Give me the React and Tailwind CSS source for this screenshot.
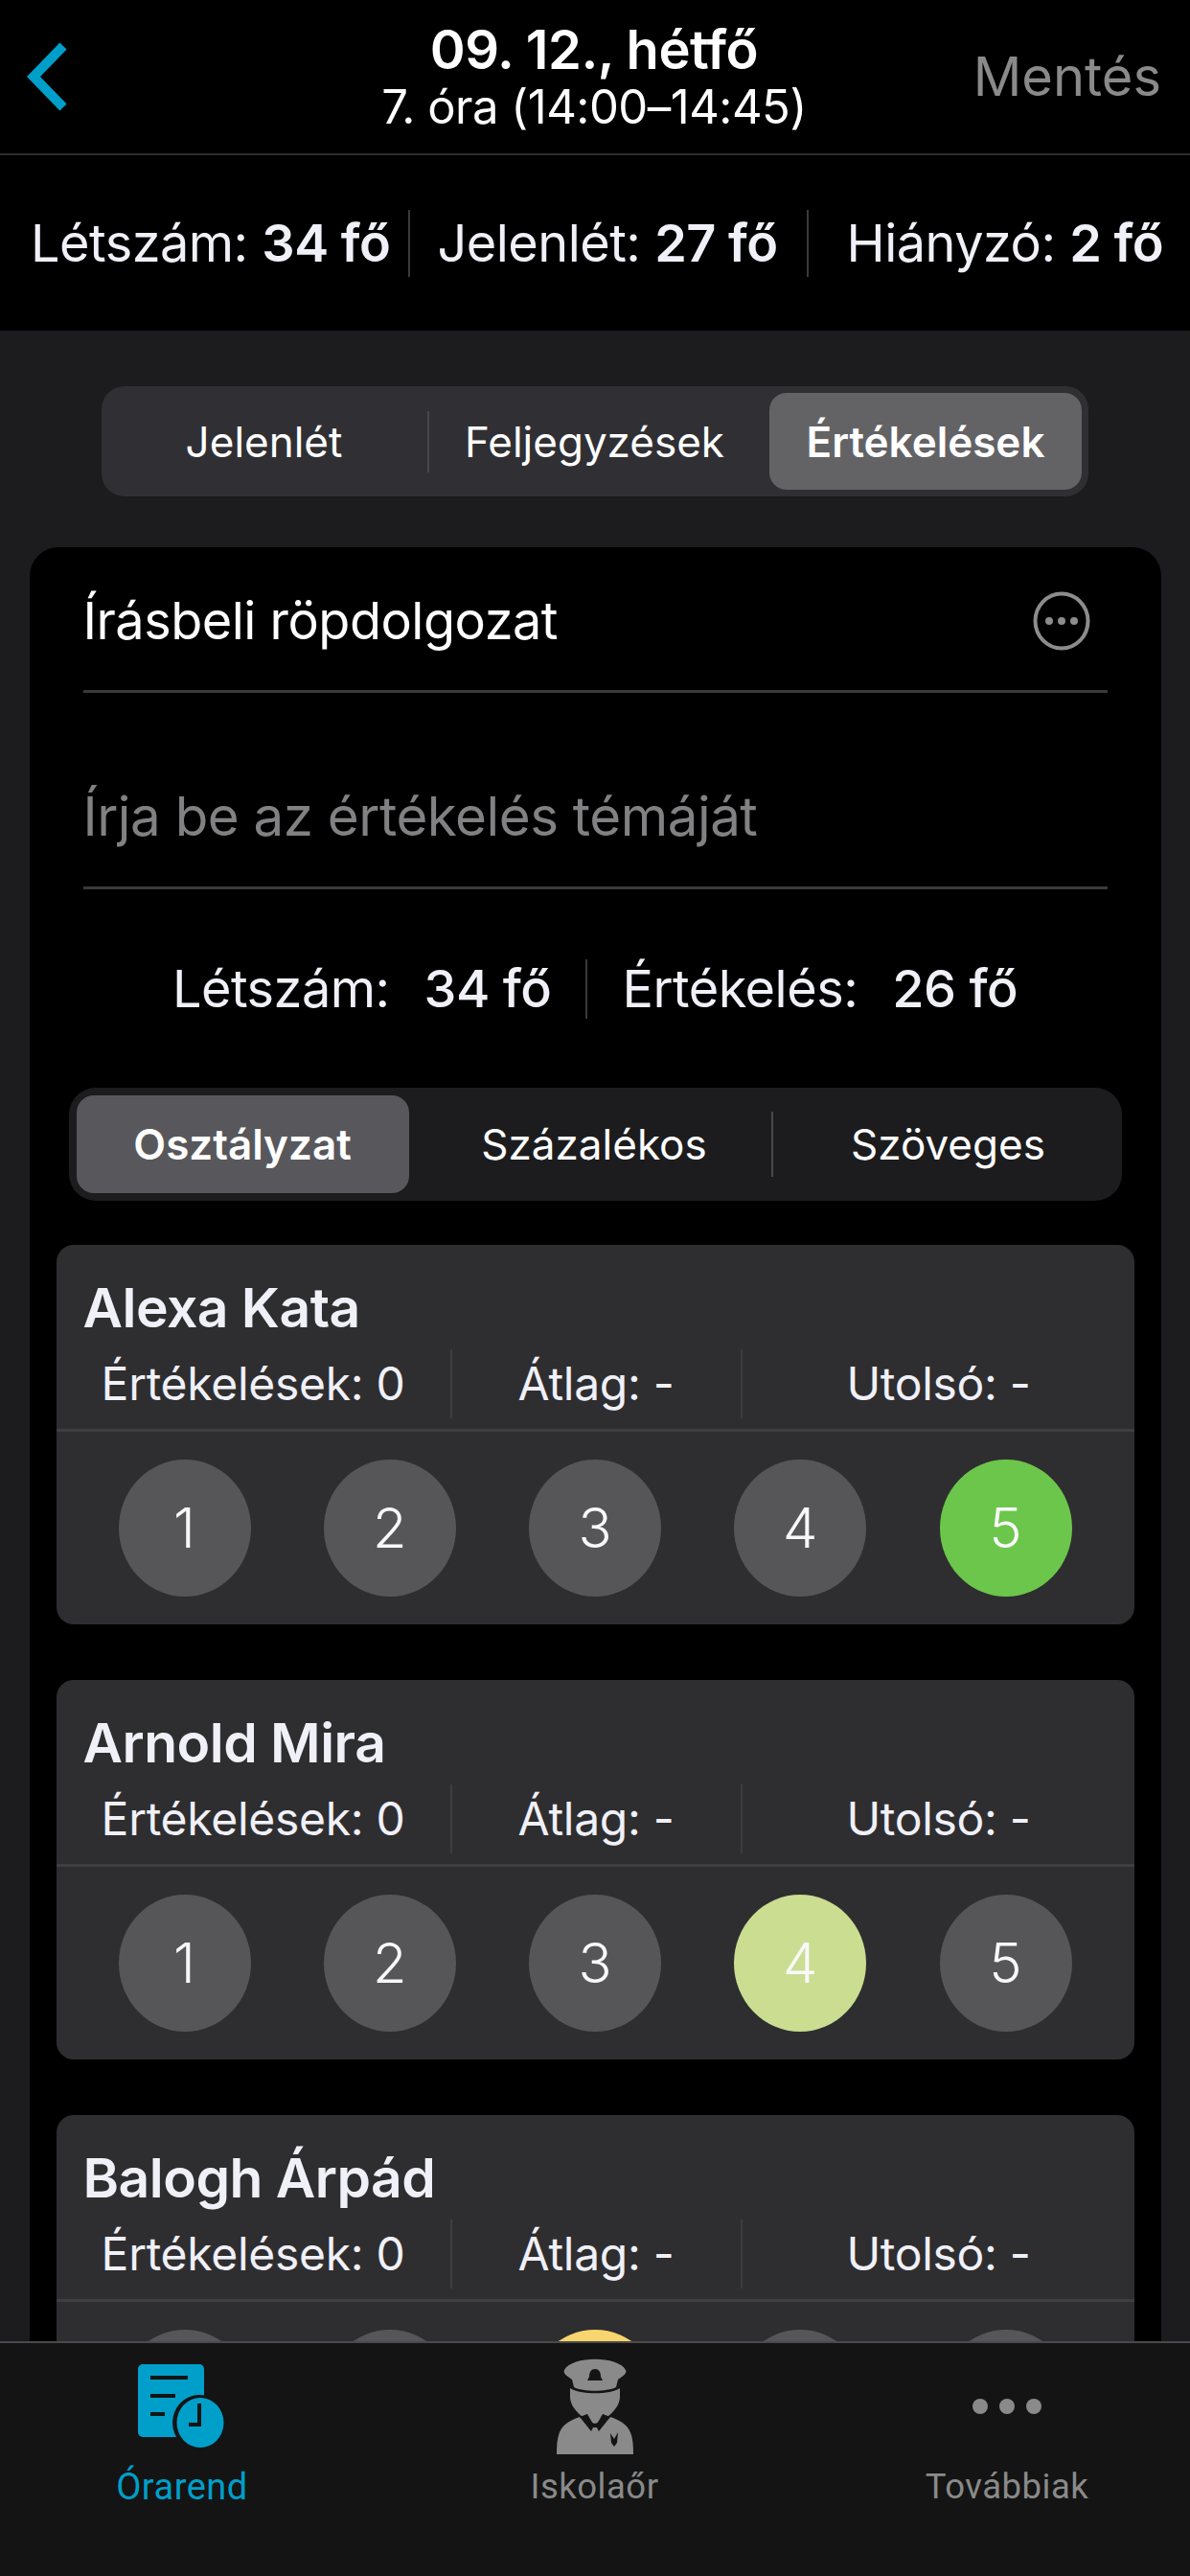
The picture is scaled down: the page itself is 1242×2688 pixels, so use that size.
const students = [
  { name: "Alexa Kata", selected: 5, color: "bg-[#6cc64b]", digits: true },
  { name: "Arnold Mira", selected: 4, color: "bg-[#cbdd90]", digits: true },
  // only the top of the circles shows above the tab bar
  { name: "Balogh Árpád", selected: 3, color: "bg-[#f8d56f]", digits: false },
];

function BackIcon() {
  return (
    <svg width="44" height="72" viewBox="0 0 44 72" className="shrink-0">
      <path d="M38 4 L7 36 L38 68" fill="none" stroke="#009fc9" strokeWidth="10" />
    </svg>
  );
}

function MoreIcon() {
  return (
    <svg width="60" height="62" viewBox="0 0 60 62">
      <ellipse cx="30" cy="31" rx="27.5" ry="28.5" fill="none" stroke="#8c8c8e" strokeWidth="4" />
      <circle cx="17" cy="31" r="4" fill="#8c8c8e" />
      <circle cx="30" cy="31" r="4" fill="#8c8c8e" />
      <circle cx="43" cy="31" r="4" fill="#8c8c8e" />
    </svg>
  );
}

function ScheduleIcon() {
  return (
    <svg width="100" height="100" viewBox="0 0 100 100">
      <rect x="4" y="6" width="69" height="76" rx="5" fill="#009fc9" />
      <rect x="17" y="18" width="39" height="4" fill="#141414" />
      <rect x="17" y="37" width="26" height="4" fill="#141414" />
      <rect x="17" y="56" width="15" height="4" fill="#141414" />
      <ellipse cx="68" cy="67" rx="28" ry="29" fill="#141414" />
      <ellipse cx="69" cy="67" rx="24.5" ry="26" fill="#009fc9" />
      <path d="M68 47 V69 H57" fill="none" stroke="#141414" strokeWidth="4" />
    </svg>
  );
}

function GuardIcon() {
  return (
    <svg width="84" height="104" viewBox="0 0 84 104">
      <path d="M2 102 C2 78 6 70 26 63 L38 74 L46 74 L58 63 C78 70 82 78 82 102 Z" fill="#8a8a8a" />
      <path d="M16 33 C26 40 58 40 68 33 L68 42 C68 54 54 66 42 70 C30 66 16 54 16 42 Z" fill="#8a8a8a" />
      <path d="M10 14 C18 -1 66 -1 74 14 C76 18 70 21 66 24 L64 32 C54 37 30 37 20 32 L18 24 C14 21 8 18 10 14 Z" fill="#8a8a8a" />
      <path d="M36 21 C36 16 38 13 42 13 C46 13 48 16 48 21 L50 25 L34 25 Z" fill="#141414" />
      <path d="M58 80 L62 86 L66 79 L65 90 L62 94 L59 90 Z" fill="#141414" />
      <path d="M26 63 L34 60 L41 72 L38 78 Z M58 63 L50 60 L43 72 L46 78 Z" fill="#141414" />
    </svg>
  );
}

function Divider({ className }) {
  return <div className={`w-[2px] shrink-0 bg-[#3a3a3c] ${className}`} />;
}

function StudentCard({ student }) {
  return (
    <div className="mx-[28px] mb-[58px] h-[396px] shrink-0 overflow-hidden rounded-[18px] bg-[#2e2e30]">
      <p className="pl-[28px] pt-[32px] text-[57px] leading-[68px] font-semibold tracking-[-0.5px] text-[#f0f0f8]">
        {student.name}
      </p>
      <div className="mt-[9px] grid h-[72px] grid-cols-[411px_305px_410px] items-center text-center text-[48px] tracking-[-0.3px] text-[#f0f0f8]">
        <span>Értékelések: 0</span>
        <span className="flex h-full items-center justify-center border-x-2 border-[#3d3d3f]">Átlag: -</span>
        <span>Utolsó: -</span>
      </div>
      <div className="mt-[11px] h-[3px] bg-[#3f3f41]" />
      <div className="mt-[29px] flex justify-between px-[65px]">
        {[1, 2, 3, 4, 5].map((n) => (
          <div
            key={n}
            className={`flex h-[143px] w-[138px] items-center justify-center rounded-[50%] text-[58px] font-light text-[#f8f8fa] ${
              n === student.selected ? student.color : "bg-[#565658]"
            }`}
          >
            {student.digits ? n : null}
          </div>
        ))}
      </div>
    </div>
  );
}

function TabItem({ icon, label, active, className }) {
  return (
    <div className={`flex w-[300px] flex-col items-center ${className}`}>
      <div className="flex h-[116px] items-center">{icon}</div>
      <span
        className={`mt-[4px] font-['Roboto'] leading-[44px] tracking-[0.5px] ${
          active ? "text-[38px] text-[#009fc9]" : "text-[36.5px] text-[#8a8a8a]"
        }`}
      >
        {label}
      </span>
    </div>
  );
}

export default function App() {
  return (
    <div className="flex h-[2688px] w-[1242px] flex-col overflow-hidden bg-[#1c1c1e] font-['Inter','Liberation_Sans',sans-serif] text-white">
      {/* top bar */}
      <header className="grid h-[162px] shrink-0 grid-cols-[1fr_auto_1fr] items-center border-b-2 border-[#2c2c2e] bg-black pl-[28px] pr-[30px]">
        <BackIcon />
        <div className="text-center">
          <p className="text-[56px] leading-[60px] font-semibold tracking-[-0.5px]">09. 12., hétfő</p>
          <p className="mt-[3px] text-[49px] leading-[54px] font-normal tracking-[-0.5px]">7. óra (14:00–14:45)</p>
        </div>
        <span className="text-right text-[56px] text-[#8a8a8a]">Mentés</span>
      </header>

      {/* totals */}
      <div className="flex h-[183px] shrink-0 items-center bg-black pl-[32px] text-[54px] tracking-[-0.5px] text-[#f0f0f8]">
        <span>
          Létszám: <b className="font-semibold">34 fő</b>
        </span>
        <Divider className="ml-[19px] mr-[28px] h-[70px]" />
        <span>
          Jelenlét: <b className="font-semibold">27 fő</b>
        </span>
        <Divider className="mx-[30px] h-[70px]" />
        <span className="ml-[10px]">
          Hiányzó: <b className="font-semibold">2 fő</b>
        </span>
      </div>

      <main className="flex min-h-0 flex-1 flex-col items-center overflow-hidden pt-[58px]">
        {/* upper segment */}
        <div className="grid h-[115px] w-[1030px] shrink-0 grid-cols-[335px_355px_326px] items-center rounded-[24px] bg-[#303034] p-[7px] text-center text-[44px]">
          <span className="flex h-[64px] items-center justify-center border-r-2 border-[#48484a] pr-[8px]">Jelenlét</span>
          <span className="pr-[10px]">Feljegyzések</span>
          <span className="flex h-full items-center justify-center rounded-[18px] bg-[#636366] font-semibold">Értékelések</span>
        </div>

        {/* black panel */}
        <section className="mt-[53px] w-[1181px] flex-1 rounded-[30px] bg-black">
          <div className="mx-[56px] flex h-[152px] items-center justify-between border-b-[3px] border-[#3a3a3c] pr-[18px] pt-[4px]">
            <span className="text-[54px] tracking-[-0.5px]">Írásbeli röpdolgozat</span>
            <MoreIcon />
          </div>
          <div className="mx-[56px] flex h-[205px] items-center border-b-[3px] border-[#3a3a3c] pt-[56px] text-[56.5px] tracking-[-0.5px] text-[#818183]">
            Írja be az értékelés témáját
          </div>
          <div className="flex h-[207px] items-center justify-center text-[54px] font-medium tracking-[-0.5px] text-[#f0f0f8]">
            <span className="font-normal">Létszám:</span>
            <span className="ml-[36px]">34 fő</span>
            <Divider className="mx-[36px] h-[62px]" />
            <span className="font-normal">Értékelés:</span>
            <span className="ml-[36px]">26 fő</span>
          </div>

          {/* lower segment */}
          <div className="mx-[41px] grid h-[118px] grid-cols-[347px_380px_356px] items-center rounded-[28px] bg-[#1c1c1e] p-[8px] text-center text-[44px]">
            <span className="flex h-full items-center justify-center rounded-[18px] bg-[#58585c] font-semibold">Osztályzat</span>
            <span className="flex h-[68px] items-center justify-center border-r-2 border-[#48484a] pl-[9px]">Százalékos</span>
            <span className="pl-[10px]">Szöveges</span>
          </div>

          <div className="mt-[46px] flex flex-col">
            {students.map((s) => (
              <StudentCard key={s.name} student={s} />
            ))}
          </div>
        </section>
      </main>

      {/* bottom tabs */}
      <nav className="relative z-10 flex h-[245px] shrink-0 justify-between border-t-2 border-[#4a4a4c] bg-[#141414] pt-[8px]">
        <TabItem icon={<ScheduleIcon />} label="Órarend" active className="ml-[40px]" />
        <TabItem icon={<GuardIcon />} label="Iskolaőr" />
        <TabItem
          icon={
            <div className="flex gap-[12px]">
              <span className="h-[16px] w-[16px] rounded-full bg-[#8a8a8a]" />
              <span className="h-[16px] w-[16px] rounded-full bg-[#8a8a8a]" />
              <span className="h-[16px] w-[16px] rounded-full bg-[#8a8a8a]" />
            </div>
          }
          label="Továbbiak"
          className="mr-[41px]"
        />
      </nav>
    </div>
  );
}
